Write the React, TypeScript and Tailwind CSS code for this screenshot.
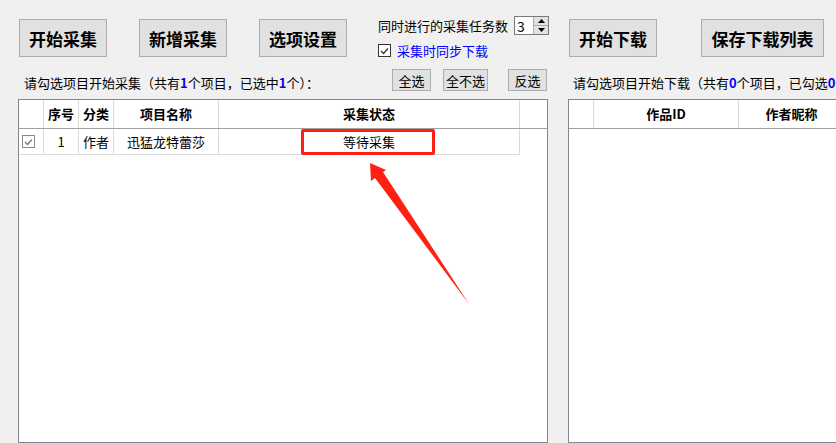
const Btn = ({ label, w }: { label: string; w: string }) => (
  <div
    className={`${w} h-[38px] flex items-center justify-center bg-[#e1e1e1] border border-[#adadad] text-[17px] font-bold leading-none`}
  >
    {label}
  </div>
);

const SmallBtn = ({ label, w }: { label: string; w: string }) => (
  <div
    className={`${w} h-[22px] flex items-center justify-center bg-[#e1e1e1] border border-[#adadad] text-[13px] leading-none`}
  >
    {label}
  </div>
);

const CheckMark = ({ color }: { color: string }) => (
  <svg width="9" height="8" viewBox="0 0 9 8">
    <path d="M1 4 L3.5 6.5 L8 1.5" fill="none" stroke={color} strokeWidth="1.3" />
  </svg>
);

const Spinner = () => (
  <div className="ml-[6px] shrink-0 w-[35px] h-[19px] flex border border-[#7a7a7a] bg-white">
    <div className="flex-1 flex items-center pl-[2px] text-[14px] leading-none">3</div>
    <div className="w-[15px] flex flex-col border-l border-[#adadad] bg-[#e1e1e1]">
      <div className="flex-1 flex items-center justify-center border-b border-[#adadad]">
        <svg width="7" height="4" viewBox="0 0 7 4">
          <path d="M0 4 L3.5 0 L7 4 Z" fill="#000" />
        </svg>
      </div>
      <div className="flex-1 flex items-center justify-center">
        <svg width="7" height="4" viewBox="0 0 7 4">
          <path d="M0 0 L3.5 4 L7 0 Z" fill="#000" />
        </svg>
      </div>
    </div>
  </div>
);

export default function App() {
  return (
    <div className="relative w-[836px] h-[443px] overflow-hidden bg-[#f0f0f0] flex font-['Noto_Sans_CJK_SC','Liberation_Sans',sans-serif] text-[13px] text-black">
      {/* left panel */}
      <div className="w-[548px] shrink-0 pl-[18px] flex flex-col h-full">
        <div className="h-[69px] shrink-0 flex items-start">
          <div className="mt-[19px] ml-[1px] flex gap-[32px] shrink-0">
            <Btn label="开始采集" w="w-[88px]" />
            <Btn label="新增采集" w="w-[88px]" />
            <Btn label="选项设置" w="w-[88px]" />
          </div>
          <div className="mt-[16px] ml-[31px] flex flex-col shrink-0">
            <div className="h-[19px] flex items-center">
              <span className="leading-none whitespace-nowrap">同时进行的采集任务数</span>
              <Spinner />
            </div>
            <div className="mt-[9px] h-[13px] flex items-center">
              <div className="w-[13px] h-[13px] border border-[#333] bg-white flex items-center justify-center">
                <CheckMark color="#333" />
              </div>
              <span className="ml-[6px] leading-none whitespace-nowrap text-[#0000ff]">采集时同步下载</span>
            </div>
          </div>
        </div>

        <div className="h-[22px] shrink-0 flex items-center">
          <span className="ml-[6px] mt-[4px] leading-none whitespace-nowrap">
            请勾选项目开始采集（共有<b className="text-[#0000ff]">1</b>个项目，已选中
            <b className="text-[#0000ff]">1</b>个）：
          </span>
          <div className="ml-auto mr-[1px] flex">
            <SmallBtn label="全选" w="w-[39px]" />
            <div className="ml-[12px]">
              <SmallBtn label="全不选" w="w-[45px]" />
            </div>
            <div className="ml-[20px]">
              <SmallBtn label="反选" w="w-[39px]" />
            </div>
          </div>
        </div>

        <div className="mt-[8px] flex-1 border border-[#828790] bg-white flex flex-col">
          <div className="h-[29px] shrink-0 flex border-b border-[#a0a0a0] font-bold">
            <div className="w-[25px] border-r border-[#dadada]" />
            <div className="w-[35px] border-r border-[#dadada] flex items-center justify-center">序号</div>
            <div className="w-[35px] border-r border-[#dadada] flex items-center justify-center">分类</div>
            <div className="w-[105px] border-r border-[#dadada] flex items-center justify-center">项目名称</div>
            <div className="w-[301px] border-r border-[#dadada] flex items-center justify-center">采集状态</div>
          </div>
          <div className="h-[26px] shrink-0 flex">
            <div className="w-[25px] border-r border-b border-[#dadada] flex items-center pl-[3px]">
              <div className="w-[13px] h-[13px] border border-[#8a8a8a] flex items-center justify-center">
                <CheckMark color="#777" />
              </div>
            </div>
            <div className="w-[35px] border-r border-b border-[#dadada] flex items-center justify-center">1</div>
            <div className="w-[35px] border-r border-b border-[#dadada] flex items-center justify-center">作者</div>
            <div className="w-[105px] border-r border-b border-[#dadada] flex items-center justify-center">迅猛龙特蕾莎</div>
            <div className="w-[301px] border-r border-b border-[#dadada] flex items-center justify-center">等待采集</div>
          </div>
        </div>
      </div>

      {/* right panel */}
      <div className="w-[420px] shrink-0 ml-[20px] flex flex-col h-full">
        <div className="h-[69px] shrink-0 flex items-start">
          <div className="mt-[19px] ml-[1px] flex gap-[44px]">
            <Btn label="开始下载" w="w-[88px]" />
            <Btn label="保存下载列表" w="w-[123px]" />
          </div>
        </div>
        <div className="h-[22px] shrink-0 flex items-center">
          <span className="ml-[5px] mt-[4px] leading-none whitespace-nowrap">
            请勾选项目开始下载（共有<b className="text-[#0000ff]">0</b>个项目，已勾选
            <b className="text-[#0000ff]">0</b>个）：
          </span>
        </div>
        <div className="mt-[8px] flex-1 border border-[#828790] bg-white flex flex-col">
          <div className="h-[29px] shrink-0 flex border-b border-[#a0a0a0] font-bold">
            <div className="w-[25px] border-r border-[#dadada]" />
            <div className="w-[145px] border-r border-[#dadada] flex items-center justify-center">作品ID</div>
            <div className="w-[106px] border-r border-[#dadada] flex items-center justify-center">作者昵称</div>
            <div className="w-[120px] border-r border-[#dadada]" />
          </div>
        </div>
      </div>

      {/* annotation */}
      <div className="absolute left-[301px] top-[129px] w-[134px] h-[26px] border-[3px] border-[#ff2014] rounded-[2px]" />
      <svg className="absolute left-0 top-0 pointer-events-none" width="836" height="443">
        <polygon
          points="370,163 386,170 383,172 469,304 375,178 371,181"
          fill="#ff2014"
        />
      </svg>
    </div>
  );
}
